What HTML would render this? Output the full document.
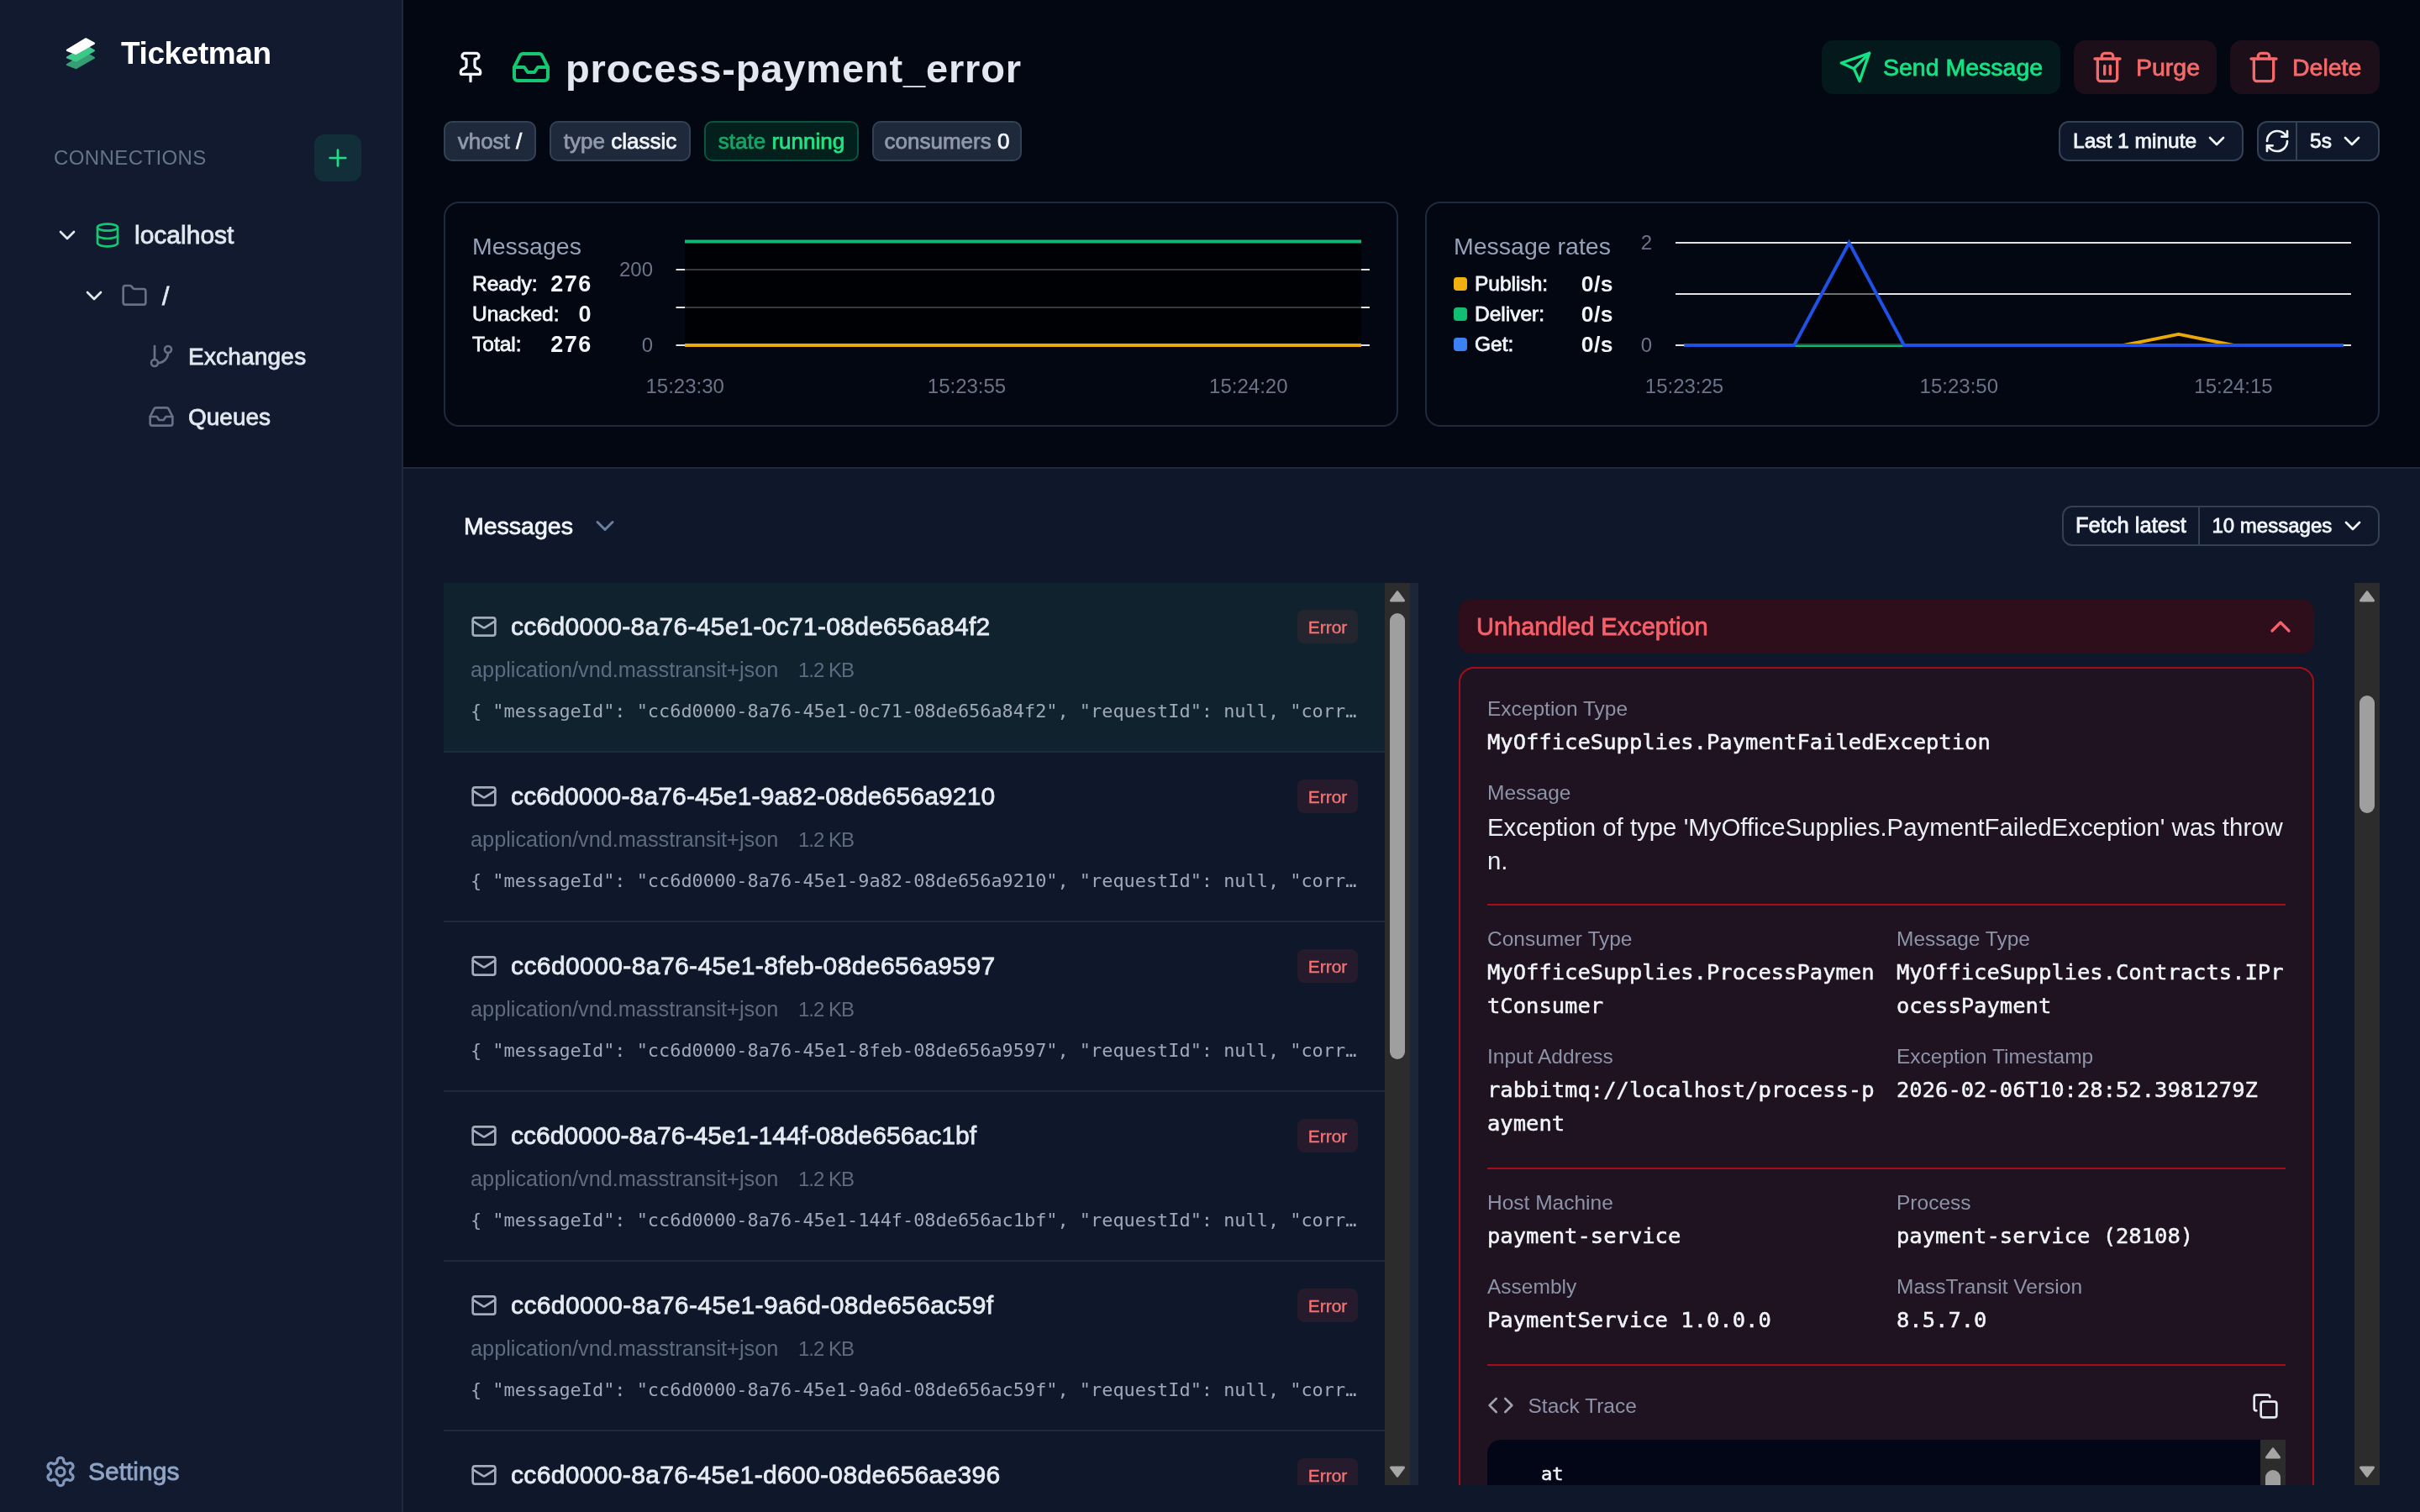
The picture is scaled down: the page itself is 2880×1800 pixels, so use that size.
<!DOCTYPE html>
<html lang="en"><head><meta charset="utf-8"><title>Ticketman - process-payment_error</title>
<style>
html,body{margin:0;padding:0;}
body{width:2880px;height:1800px;overflow:hidden;background:#0f172a;
  font-family:"Liberation Sans",sans-serif;color:#e2e8f0;}
#app{position:relative;width:2880px;height:1800px;overflow:hidden;}
.abs,.t,.ic{position:absolute;}
.t{white-space:nowrap;}
.b{font-weight:bold;}
.mono{font-family:"DejaVu Sans Mono","Liberation Mono",monospace;}
.ic{display:block;overflow:visible;}

/* ---------- sidebar ---------- */
#sidebar{position:absolute;left:0;top:0;width:478px;height:1800px;background:#111a2e;
  border-right:2px solid #1e293b;}
#addbtn{position:absolute;left:374px;top:160px;width:56px;height:56px;border-radius:12px;background:#112e39;}

/* ---------- header ---------- */
#header{position:absolute;left:480px;top:0;width:2400px;height:556px;background:#030712;
  border-bottom:2px solid #1e293b;}
.tag{position:absolute;top:144px;height:44px;border:2px solid #334155;background:#1e293b;border-radius:10px;
  font-size:26px;line-height:44px;color:#9099ab;white-space:nowrap;text-align:center;}
.tag b{font-weight:normal;color:#f1f5f9;}
.tag.run{background:#03201c;border-color:#0a5540;color:#16a568;}
.tag.run b{color:#22e384;}
.btn{position:absolute;top:48px;height:64px;border-radius:14px;}
.btn.g{background:#03191c;}
.btn.r{background:#1c0f1a;}
.sel{position:absolute;height:44px;border:2px solid #334155;background:#0f172a;border-radius:12px;}
.card{position:absolute;top:240px;width:1132px;height:264px;border:2px solid #1e293b;border-radius:18px;background:#030712;}

/* ---------- lower ---------- */
#lower{position:absolute;left:480px;top:558px;width:2400px;height:1242px;background:#0f172a;}
.item{position:absolute;left:48px;width:1120px;height:200px;border-bottom:2px solid #1c2a3c;}
.item.sel0{background:#0f222d;}
.err{position:absolute;left:1016px;top:32px;width:72px;height:40px;border-radius:8px;background:rgba(239,68,68,0.1);
  color:#f87171;font-size:21px;line-height:41px;text-align:center;-webkit-text-stroke:0.4px currentColor;}
.sb{position:absolute;background:#2c2c2c;}
.sb .th{position:absolute;left:6px;width:18px;border-radius:9px;background:#9f9f9f;}
#gutter{position:absolute;left:1198px;top:136px;width:10px;height:1074px;background:#1b2638;}
#pane{position:absolute;left:1208px;top:136px;width:1114px;height:1074px;overflow:hidden;}
#exhead{position:absolute;left:48px;top:20px;width:1018px;height:64px;border-radius:14px;background:#2d0e1a;}
#exbox{position:absolute;left:48px;top:100px;width:1014px;height:1100px;border:2px solid #a50d1b;border-radius:18px;background:#1f1221;}
.hr{position:absolute;left:32px;width:950px;height:2px;background:#a50d1b;}
.lab{color:#8a93a6;}
#code{position:absolute;left:32px;top:918px;width:950px;height:200px;border-radius:16px 0 0 16px;background:#020617;overflow:hidden;}

/* emulate medium weight of the original UI font */
.m{-webkit-text-stroke:0.8px currentColor;}
.tag{-webkit-text-stroke:0.75px currentColor;}
.mono.w{-webkit-text-stroke:0.5px currentColor;}
#app{will-change:transform;}

</style></head>
<body>
<div id="app">
<div id="sidebar">
<svg class="ic" style="left:76px;top:44px;width:40px;height:40px" viewBox="0 0 40 40" stroke-linejoin="round" stroke-width="2.4"><polygon points="4,33 26.2,19.4 35.8,24.8 14.4,37" fill="#349f72" stroke="#349f72"/><polygon points="4,24.4 26.2,10.8 35.8,16.2 14.4,28.4" fill="#3cc888" stroke="#3cc888"/><polygon points="4,15.8 26.2,2.4 35.8,7.6 14.4,19.8" fill="#ffffff" stroke="#ffffff"/></svg>
<div class="t b" style="left:144px;top:37.5px;font-size:37px;line-height:51px;color:#ffffff;letter-spacing:-0.4px">Ticketman</div>
<div class="t " style="left:64px;top:170.5px;font-size:24px;line-height:33px;color:#64748b;letter-spacing:0.4px">CONNECTIONS</div>
<div id="addbtn"></div>
<svg class="ic" style="left:386px;top:172px;width:32px;height:32px;" viewBox="0 0 24 24" fill="none" stroke="#16e386" stroke-width="2" stroke-linecap="round" stroke-linejoin="round"><path d="M5 12h14"/><path d="M12 5v14"/></svg>
<svg class="ic" style="left:64px;top:264px;width:32px;height:32px;" viewBox="0 0 24 24" fill="none" stroke="#e2e8f0" stroke-width="2" stroke-linecap="round" stroke-linejoin="round"><path d="m6 9 6 6 6-6"/></svg>
<svg class="ic" style="left:112px;top:264px;width:32px;height:32px;" viewBox="0 0 24 24" fill="none" stroke="#14c873" stroke-width="2" stroke-linecap="round" stroke-linejoin="round"><ellipse cx="12" cy="5" rx="9" ry="3"/><path d="M3 5V19A9 3 0 0 0 21 19V5"/><path d="M3 12A9 3 0 0 0 21 12"/></svg>
<div class="t m" style="left:160px;top:259.0px;font-size:30px;line-height:42px;color:#e2e8f0;">localhost</div>
<svg class="ic" style="left:96px;top:336px;width:32px;height:32px;" viewBox="0 0 24 24" fill="none" stroke="#e2e8f0" stroke-width="2" stroke-linecap="round" stroke-linejoin="round"><path d="m6 9 6 6 6-6"/></svg>
<svg class="ic" style="left:144px;top:336px;width:32px;height:32px;" viewBox="0 0 24 24" fill="none" stroke="#667088" stroke-width="2" stroke-linecap="round" stroke-linejoin="round"><path d="M20 20a2 2 0 0 0 2-2V8a2 2 0 0 0-2-2h-7.9a2 2 0 0 1-1.69-.9L9.6 3.9A2 2 0 0 0 7.93 3H4a2 2 0 0 0-2 2v13a2 2 0 0 0 2 2Z"/></svg>
<div class="t m" style="left:193px;top:332.4px;font-size:30px;line-height:42px;color:#e2e8f0;">/</div>
<svg class="ic" style="left:176px;top:408px;width:32px;height:32px;" viewBox="0 0 24 24" fill="none" stroke="#667088" stroke-width="2" stroke-linecap="round" stroke-linejoin="round"><line x1="6" x2="6" y1="3" y2="15"/><circle cx="18" cy="6" r="3"/><circle cx="6" cy="18" r="3"/><path d="M18 9a9 9 0 0 1-9 9"/></svg>
<div class="t m" style="left:224px;top:404.5px;font-size:28px;line-height:39px;color:#e2e8f0;letter-spacing:0.2px">Exchanges</div>
<svg class="ic" style="left:176px;top:480px;width:32px;height:32px;" viewBox="0 0 24 24" fill="none" stroke="#667088" stroke-width="2" stroke-linecap="round" stroke-linejoin="round"><polyline points="22 12 16 12 14 15 10 15 8 12 2 12"/><path d="M5.45 5.11 2 12v6a2 2 0 0 0 2 2h16a2 2 0 0 0 2-2v-6l-3.45-6.89A2 2 0 0 0 16.76 4H7.24a2 2 0 0 0-1.79 1.11z"/></svg>
<div class="t m" style="left:224px;top:476.5px;font-size:28px;line-height:39px;color:#e2e8f0;">Queues</div>
<svg class="ic" style="left:52px;top:1732px;width:40px;height:40px;" viewBox="0 0 24 24" fill="none" stroke="#8196b8" stroke-width="2" stroke-linecap="round" stroke-linejoin="round"><path d="M12.22 2h-.44a2 2 0 0 0-2 2v.18a2 2 0 0 1-1 1.73l-.43.25a2 2 0 0 1-2 0l-.15-.08a2 2 0 0 0-2.73.73l-.22.38a2 2 0 0 0 .73 2.73l.15.1a2 2 0 0 1 1 1.72v.51a2 2 0 0 1-1 1.74l-.15.09a2 2 0 0 0-.73 2.73l.22.38a2 2 0 0 0 2.73.73l.15-.08a2 2 0 0 1 2 0l.43.25a2 2 0 0 1 1 1.73V20a2 2 0 0 0 2 2h.44a2 2 0 0 0 2-2v-.18a2 2 0 0 1 1-1.73l.43-.25a2 2 0 0 1 2 0l.15.08a2 2 0 0 0 2.73-.73l.22-.39a2 2 0 0 0-.73-2.73l-.15-.08a2 2 0 0 1-1-1.74v-.5a2 2 0 0 1 1-1.74l.15-.09a2 2 0 0 0 .73-2.73l-.22-.38a2 2 0 0 0-2.73-.73l-.15.08a2 2 0 0 1-2 0l-.43-.25a2 2 0 0 1-1-1.73V4a2 2 0 0 0-2-2z"/><circle cx="12" cy="12" r="3"/></svg>
<div class="t m" style="left:105px;top:1731.0px;font-size:30px;line-height:42px;color:#90a4c6;">Settings</div>
</div>
<div id="header">
<svg class="ic" style="left:60px;top:60px;width:40px;height:40px;" viewBox="0 0 24 24" fill="none" stroke="#f1f5f9" stroke-width="2" stroke-linecap="round" stroke-linejoin="round"><path d="M12 17v5"/><path d="M9 10.76a2 2 0 0 1-1.11 1.79l-1.78.9A2 2 0 0 0 5 15.24V16a1 1 0 0 0 1 1h12a1 1 0 0 0 1-1v-.76a2 2 0 0 0-1.11-1.79l-1.78-.9A2 2 0 0 1 15 10.76V7a1 1 0 0 1 1-1 2 2 0 0 0 0-4H8a2 2 0 0 0 0 4 1 1 0 0 1 1 1z"/></svg>
<svg class="ic" style="left:128px;top:56px;width:48px;height:48px;" viewBox="0 0 24 24" fill="none" stroke="#14c873" stroke-width="2" stroke-linecap="round" stroke-linejoin="round"><polyline points="22 12 16 12 14 15 10 15 8 12 2 12"/><path d="M5.45 5.11 2 12v6a2 2 0 0 0 2 2h16a2 2 0 0 0 2-2v-6l-3.45-6.89A2 2 0 0 0 16.76 4H7.24a2 2 0 0 0-1.79 1.11z"/></svg>
<div class="t b" style="left:193px;top:48.5px;font-size:47px;line-height:65px;color:#e2e8f0;letter-spacing:0.85px">process-payment_error</div>
<div class="tag" style="left:48px;width:106px">vhost <b>/</b></div>
<div class="tag" style="left:174px;width:164px">type <b>classic</b></div>
<div class="tag run" style="left:358px;width:180px">state <b>running</b></div>
<div class="tag" style="left:558px;width:174px">consumers <b>0</b></div>
<div class="btn g" style="left:1688px;width:284px"></div>
<svg class="ic" style="left:1708px;top:60px;width:40px;height:40px;" viewBox="0 0 24 24" fill="none" stroke="#12e384" stroke-width="2" stroke-linecap="round" stroke-linejoin="round"><path d="m22 2-7 20-4-9-9-4Z"/><path d="M22 2 11 13"/></svg>
<div class="t m" style="left:1761px;top:60.5px;font-size:28.5px;line-height:39px;color:#12e384;">Send Message</div>
<div class="btn r" style="left:1988px;width:170px"></div>
<svg class="ic" style="left:2008px;top:60px;width:40px;height:40px;" viewBox="0 0 24 24" fill="none" stroke="#f46a6a" stroke-width="2" stroke-linecap="round" stroke-linejoin="round"><path d="M3 6h18"/><path d="M19 6v14c0 1-1 2-2 2H7c-1 0-2-1-2-2V6"/><path d="M8 6V4c0-1 1-2 2-2h4c1 0 2 1 2 2v2"/><line x1="10" x2="10" y1="11" y2="17"/><line x1="14" x2="14" y1="11" y2="17"/></svg>
<div class="t m" style="left:2062px;top:60.5px;font-size:28.5px;line-height:39px;color:#f46a6a;">Purge</div>
<div class="btn r" style="left:2174px;width:178px"></div>
<svg class="ic" style="left:2194px;top:60px;width:40px;height:40px;" viewBox="0 0 24 24" fill="none" stroke="#f46a6a" stroke-width="2" stroke-linecap="round" stroke-linejoin="round"><path d="M3 6h18"/><path d="M19 6v14c0 1-1 2-2 2H7c-1 0-2-1-2-2V6"/><path d="M8 6V4c0-1 1-2 2-2h4c1 0 2 1 2 2v2"/></svg>
<div class="t m" style="left:2248px;top:60.5px;font-size:28.5px;line-height:39px;color:#f46a6a;">Delete</div>
<div class="sel" style="left:1970px;top:144px;width:216px"></div>
<div class="t m" style="left:1987px;top:151.0px;font-size:24.5px;line-height:34px;color:#f1f5f9;">Last 1 minute</div>
<svg class="ic" style="left:2142px;top:152px;width:32px;height:32px;" viewBox="0 0 24 24" fill="none" stroke="#f1f5f9" stroke-width="2" stroke-linecap="round" stroke-linejoin="round"><path d="m6 9 6 6 6-6"/></svg>
<div class="sel" style="left:2206px;top:144px;width:142px"></div>
<div class="abs" style="left:2252px;top:146px;width:2px;height:44px;background:#334155"></div>
<svg class="ic" style="left:2214px;top:152px;width:32px;height:32px;" viewBox="0 0 24 24" fill="none" stroke="#f1f5f9" stroke-width="2" stroke-linecap="round" stroke-linejoin="round"><path d="M3 12a9 9 0 0 1 9-9 9.75 9.75 0 0 1 6.74 2.74L21 8"/><path d="M21 3v5h-5"/><path d="M21 12a9 9 0 0 1-9 9 9.75 9.75 0 0 1-6.74-2.74L3 16"/><path d="M8 16H3v5"/></svg>
<div class="t m" style="left:2269px;top:151.0px;font-size:24.5px;line-height:34px;color:#f1f5f9;">5s</div>
<svg class="ic" style="left:2303px;top:152px;width:32px;height:32px;" viewBox="0 0 24 24" fill="none" stroke="#f1f5f9" stroke-width="2" stroke-linecap="round" stroke-linejoin="round"><path d="m6 9 6 6 6-6"/></svg>
<div class="card" style="left:48px"></div>
<div class="card" style="left:1216px"></div>
<div class="t " style="left:82px;top:273.9px;font-size:28.5px;line-height:39px;color:#94a3b8;">Messages</div>
<div class="t m" style="left:82px;top:320.6px;font-size:24.5px;line-height:34px;color:#f1f5f9;">Ready:</div>
<div class="t b" style="right:2175px;top:319.6px;font-size:27px;line-height:37px;color:#f1f5f9;letter-spacing:1.6px">276</div>
<div class="t m" style="left:82px;top:356.6px;font-size:24.5px;line-height:34px;color:#f1f5f9;">Unacked:</div>
<div class="t b" style="right:2175px;top:355.6px;font-size:27px;line-height:37px;color:#f1f5f9;letter-spacing:1.6px">0</div>
<div class="t m" style="left:82px;top:392.6px;font-size:24.5px;line-height:34px;color:#f1f5f9;">Total:</div>
<div class="t b" style="right:2175px;top:391.6px;font-size:27px;line-height:37px;color:#f1f5f9;letter-spacing:1.6px">276</div>
<div class="t " style="left:1250px;top:273.9px;font-size:28.5px;line-height:39px;color:#94a3b8;">Message rates</div>
<div class="abs" style="left:1250px;top:329.6px;width:16px;height:16px;border-radius:4px;background:#f0b010"></div>
<div class="t m" style="left:1275px;top:320.6px;font-size:24.5px;line-height:34px;color:#f1f5f9;">Publish:</div>
<div class="t b" style="right:960px;top:319.6px;font-size:26.5px;line-height:37px;color:#f1f5f9;letter-spacing:0.5px">0/s</div>
<div class="abs" style="left:1250px;top:365.6px;width:16px;height:16px;border-radius:4px;background:#10c070"></div>
<div class="t m" style="left:1275px;top:356.6px;font-size:24.5px;line-height:34px;color:#f1f5f9;">Deliver:</div>
<div class="t b" style="right:960px;top:355.6px;font-size:26.5px;line-height:37px;color:#f1f5f9;letter-spacing:0.5px">0/s</div>
<div class="abs" style="left:1250px;top:401.6px;width:16px;height:16px;border-radius:4px;background:#3b82f6"></div>
<div class="t m" style="left:1275px;top:392.6px;font-size:24.5px;line-height:34px;color:#f1f5f9;">Get:</div>
<div class="t b" style="right:960px;top:391.6px;font-size:26.5px;line-height:37px;color:#f1f5f9;letter-spacing:0.5px">0/s</div>
<svg class="ic" style="left:0;top:0;width:2400px;height:556px" viewBox="480 0 2400 556" font-family="Liberation Sans, sans-serif" font-size="24" fill="#6b7589"><line x1="804.5" x2="1630" y1="321.0" y2="321.0" stroke="#e2e2e2" stroke-width="2"/><line x1="804.5" x2="1630" y1="366.0" y2="366.0" stroke="#e2e2e2" stroke-width="2"/><line x1="804.5" x2="1630" y1="411.0" y2="411.0" stroke="#e2e2e2" stroke-width="2"/><rect x="815" y="287.4" width="805" height="123.6" fill="#000" fill-opacity="0.75"/><line x1="815" x2="1620" y1="411.0" y2="411.0" stroke="#ecaa0a" stroke-width="4"/><line x1="815" x2="1620" y1="287.4" y2="287.4" stroke="#10b973" stroke-width="4"/><text x="777" y="328.6" text-anchor="end">200</text><text x="777" y="418.6" text-anchor="end">0</text><text x="815.2" y="468" text-anchor="middle">15:23:30</text><text x="1150.5" y="468" text-anchor="middle">15:23:55</text><text x="1485.8" y="468" text-anchor="middle">15:24:20</text><line x1="1994" x2="2798" y1="289.1" y2="289.1" stroke="#e2e2e2" stroke-width="2"/><line x1="1994" x2="2798" y1="350.05" y2="350.05" stroke="#e2e2e2" stroke-width="2"/><line x1="1994" x2="2798" y1="411.0" y2="411.0" stroke="#e2e2e2" stroke-width="2"/><polygon points="2004.5,411.0 2069.8,411.0 2135.2,411.0 2200.6,411.0 2265.9,411.0 2331.2,411.0 2396.6,411.0 2461.9,411.0 2527.3,411.0 2592.7,397.9 2658.0,411.0 2723.3,411.0 2788.7,411.0" fill="#000" fill-opacity="0.5"/><polyline points="2004.5,411.0 2069.8,411.0 2135.2,411.0 2200.6,411.0 2265.9,411.0 2331.2,411.0 2396.6,411.0 2461.9,411.0 2527.3,411.0 2592.7,397.9 2658.0,411.0 2723.3,411.0 2788.7,411.0" fill="none" stroke="#ecaa0a" stroke-width="4" stroke-linejoin="round"/><polyline points="2004.5,411.0 2069.8,411.0 2135.2,411.0 2200.6,411.0 2265.9,411.0 2331.2,411.0 2396.6,411.0 2461.9,411.0 2527.3,411.0 2592.7,411.0 2658.0,411.0 2723.3,411.0 2788.7,411.0" fill="none" stroke="#10b973" stroke-width="4"/><polygon points="2004.5,411.0 2069.8,411.0 2135.2,411.0 2200.6,289.1 2265.9,411.0 2331.2,411.0 2396.6,411.0 2461.9,411.0 2527.3,411.0 2592.7,411.0 2658.0,411.0 2723.3,411.0 2788.7,411.0" fill="#000" fill-opacity="0.5"/><polyline points="2004.5,411.0 2069.8,411.0 2135.2,411.0 2200.6,289.1 2265.9,411.0 2331.2,411.0 2396.6,411.0 2461.9,411.0 2527.3,411.0 2592.7,411.0 2658.0,411.0 2723.3,411.0 2788.7,411.0" fill="none" stroke="#1f51e4" stroke-width="4" stroke-linejoin="miter"/><text x="1966" y="296.7" text-anchor="end">2</text><text x="1966" y="418.6" text-anchor="end">0</text><text x="2004.5" y="468" text-anchor="middle">15:23:25</text><text x="2331.3" y="468" text-anchor="middle">15:23:50</text><text x="2658" y="468" text-anchor="middle">15:24:15</text></svg>
</div>
<div id="lower">
<div class="t m" style="left:72px;top:48.5px;font-size:28.5px;line-height:39px;color:#f1f5f9;">Messages</div>
<svg class="ic" style="left:222px;top:50px;width:36px;height:36px;" viewBox="0 0 24 24" fill="none" stroke="#6b7f9e" stroke-width="2" stroke-linecap="round" stroke-linejoin="round"><path d="m6 9 6 6 6-6"/></svg>
<div class="sel" style="left:1974px;top:44px;width:374px;background:#0f172a"></div>
<div class="abs" style="left:2136px;top:46px;width:2px;height:44px;background:#334155"></div>
<div class="t m" style="left:1990px;top:49.5px;font-size:25.5px;line-height:35px;color:#f1f5f9;">Fetch latest</div>
<div class="t m" style="left:2152.5px;top:50.5px;font-size:24px;line-height:33px;color:#f1f5f9;">10 messages</div>
<svg class="ic" style="left:2304px;top:52px;width:32px;height:32px;" viewBox="0 0 24 24" fill="none" stroke="#f1f5f9" stroke-width="2" stroke-linecap="round" stroke-linejoin="round"><path d="m6 9 6 6 6-6"/></svg>
<div class="abs" id="list" style="left:0;top:136px;width:1168px;height:1074px;overflow:hidden">
<div class="item sel0" style="top:0px">
<svg class="ic" style="left:32px;top:36px;width:32px;height:32px;" viewBox="0 0 24 24" fill="none" stroke="#a4acba" stroke-width="2" stroke-linecap="round" stroke-linejoin="round"><rect width="20" height="16" x="2" y="4" rx="2"/><path d="m22 7-8.97 5.7a1.94 1.94 0 0 1-2.06 0L2 7"/></svg>
<div class="t m" style="left:80px;top:31.0px;font-size:30px;line-height:42px;color:#e6ebf2;letter-spacing:0.278px">cc6d0000-8a76-45e1-0c71-08de656a84f2</div>
<div class="err">Error</div>
<div class="t " style="left:32px;top:85.5px;font-size:25.3px;line-height:35px;color:#5f6b80;">application/vnd.masstransit+json</div>
<div class="t " style="left:422px;top:86.5px;font-size:24px;line-height:33px;color:#5f6b80;letter-spacing:-1px">1.2 KB</div>
<div class="t mono" style="left:32px;top:138.3px;font-size:21.9px;line-height:30px;color:#a0a9b8;">{ &quot;messageId&quot;: &quot;cc6d0000-8a76-45e1-0c71-08de656a84f2&quot;, &quot;requestId&quot;: null, &quot;corr…</div>
</div>
<div class="item" style="top:202px">
<svg class="ic" style="left:32px;top:36px;width:32px;height:32px;" viewBox="0 0 24 24" fill="none" stroke="#a4acba" stroke-width="2" stroke-linecap="round" stroke-linejoin="round"><rect width="20" height="16" x="2" y="4" rx="2"/><path d="m22 7-8.97 5.7a1.94 1.94 0 0 1-2.06 0L2 7"/></svg>
<div class="t m" style="left:80px;top:31.0px;font-size:30px;line-height:42px;color:#e6ebf2;letter-spacing:0.163px">cc6d0000-8a76-45e1-9a82-08de656a9210</div>
<div class="err">Error</div>
<div class="t " style="left:32px;top:85.5px;font-size:25.3px;line-height:35px;color:#5f6b80;">application/vnd.masstransit+json</div>
<div class="t " style="left:422px;top:86.5px;font-size:24px;line-height:33px;color:#5f6b80;letter-spacing:-1px">1.2 KB</div>
<div class="t mono" style="left:32px;top:138.3px;font-size:21.9px;line-height:30px;color:#a0a9b8;">{ &quot;messageId&quot;: &quot;cc6d0000-8a76-45e1-9a82-08de656a9210&quot;, &quot;requestId&quot;: null, &quot;corr…</div>
</div>
<div class="item" style="top:404px">
<svg class="ic" style="left:32px;top:36px;width:32px;height:32px;" viewBox="0 0 24 24" fill="none" stroke="#a4acba" stroke-width="2" stroke-linecap="round" stroke-linejoin="round"><rect width="20" height="16" x="2" y="4" rx="2"/><path d="m22 7-8.97 5.7a1.94 1.94 0 0 1-2.06 0L2 7"/></svg>
<div class="t m" style="left:80px;top:31.0px;font-size:30px;line-height:42px;color:#e6ebf2;letter-spacing:0.401px">cc6d0000-8a76-45e1-8feb-08de656a9597</div>
<div class="err">Error</div>
<div class="t " style="left:32px;top:85.5px;font-size:25.3px;line-height:35px;color:#5f6b80;">application/vnd.masstransit+json</div>
<div class="t " style="left:422px;top:86.5px;font-size:24px;line-height:33px;color:#5f6b80;letter-spacing:-1px">1.2 KB</div>
<div class="t mono" style="left:32px;top:138.3px;font-size:21.9px;line-height:30px;color:#a0a9b8;">{ &quot;messageId&quot;: &quot;cc6d0000-8a76-45e1-8feb-08de656a9597&quot;, &quot;requestId&quot;: null, &quot;corr…</div>
</div>
<div class="item" style="top:606px">
<svg class="ic" style="left:32px;top:36px;width:32px;height:32px;" viewBox="0 0 24 24" fill="none" stroke="#a4acba" stroke-width="2" stroke-linecap="round" stroke-linejoin="round"><rect width="20" height="16" x="2" y="4" rx="2"/><path d="m22 7-8.97 5.7a1.94 1.94 0 0 1-2.06 0L2 7"/></svg>
<div class="t m" style="left:80px;top:31.0px;font-size:30px;line-height:42px;color:#e6ebf2;letter-spacing:0.054px">cc6d0000-8a76-45e1-144f-08de656ac1bf</div>
<div class="err">Error</div>
<div class="t " style="left:32px;top:85.5px;font-size:25.3px;line-height:35px;color:#5f6b80;">application/vnd.masstransit+json</div>
<div class="t " style="left:422px;top:86.5px;font-size:24px;line-height:33px;color:#5f6b80;letter-spacing:-1px">1.2 KB</div>
<div class="t mono" style="left:32px;top:138.3px;font-size:21.9px;line-height:30px;color:#a0a9b8;">{ &quot;messageId&quot;: &quot;cc6d0000-8a76-45e1-144f-08de656ac1bf&quot;, &quot;requestId&quot;: null, &quot;corr…</div>
</div>
<div class="item" style="top:808px">
<svg class="ic" style="left:32px;top:36px;width:32px;height:32px;" viewBox="0 0 24 24" fill="none" stroke="#a4acba" stroke-width="2" stroke-linecap="round" stroke-linejoin="round"><rect width="20" height="16" x="2" y="4" rx="2"/><path d="m22 7-8.97 5.7a1.94 1.94 0 0 1-2.06 0L2 7"/></svg>
<div class="t m" style="left:80px;top:31.0px;font-size:30px;line-height:42px;color:#e6ebf2;letter-spacing:0.392px">cc6d0000-8a76-45e1-9a6d-08de656ac59f</div>
<div class="err">Error</div>
<div class="t " style="left:32px;top:85.5px;font-size:25.3px;line-height:35px;color:#5f6b80;">application/vnd.masstransit+json</div>
<div class="t " style="left:422px;top:86.5px;font-size:24px;line-height:33px;color:#5f6b80;letter-spacing:-1px">1.2 KB</div>
<div class="t mono" style="left:32px;top:138.3px;font-size:21.9px;line-height:30px;color:#a0a9b8;">{ &quot;messageId&quot;: &quot;cc6d0000-8a76-45e1-9a6d-08de656ac59f&quot;, &quot;requestId&quot;: null, &quot;corr…</div>
</div>
<div class="item" style="top:1010px">
<svg class="ic" style="left:32px;top:36px;width:32px;height:32px;" viewBox="0 0 24 24" fill="none" stroke="#a4acba" stroke-width="2" stroke-linecap="round" stroke-linejoin="round"><rect width="20" height="16" x="2" y="4" rx="2"/><path d="m22 7-8.97 5.7a1.94 1.94 0 0 1-2.06 0L2 7"/></svg>
<div class="t m" style="left:80px;top:31.0px;font-size:30px;line-height:42px;color:#e6ebf2;letter-spacing:0.337px">cc6d0000-8a76-45e1-d600-08de656ae396</div>
<div class="err">Error</div>
<div class="t " style="left:32px;top:85.5px;font-size:25.3px;line-height:35px;color:#5f6b80;">application/vnd.masstransit+json</div>
<div class="t " style="left:422px;top:86.5px;font-size:24px;line-height:33px;color:#5f6b80;letter-spacing:-1px">1.2 KB</div>
<div class="t mono" style="left:32px;top:138.3px;font-size:21.9px;line-height:30px;color:#a0a9b8;">{ &quot;messageId&quot;: &quot;cc6d0000-8a76-45e1-d600-08de656ae396&quot;, &quot;requestId&quot;: null, &quot;corr…</div>
</div>
</div>
<div class="sb" style="left:1168px;top:136px;width:30px;height:1074px"><svg class="ic" style="left:5px;top:9px;width:20px;height:14px" viewBox="0 0 20 14"><polygon points="2.5,12 10,1.8 17.5,12" fill="#a6a6a6" stroke="#a6a6a6" stroke-width="3" stroke-linejoin="round"/></svg><div class="th" style="top:36px;height:531px"></div><svg class="ic" style="left:5px;top:1051px;width:20px;height:14px" viewBox="0 0 20 14"><polygon points="2.5,2 10,12.2 17.5,2" fill="#a6a6a6" stroke="#a6a6a6" stroke-width="3" stroke-linejoin="round"/></svg></div>
<div id="gutter"></div>
<div id="pane">
<div id="exhead"></div>
<div class="t m" style="left:69px;top:32.0px;font-size:29px;line-height:40px;color:#f6606a;">Unhandled Exception</div>
<svg class="ic" style="left:1006px;top:32px;width:40px;height:40px;" viewBox="0 0 24 24" fill="none" stroke="#f6606a" stroke-width="2" stroke-linecap="round" stroke-linejoin="round"><path d="m18 15-6-6-6 6"/></svg>
<div id="exbox">
<div class="t " style="left:32px;top:31.0px;font-size:24.5px;line-height:34px;color:#8d94a8;">Exception Type</div>
<div class="t mono w" style="left:32px;top:70.0px;font-size:25.5px;line-height:35px;color:#f1f5f9;">MyOfficeSupplies.PaymentFailedException</div>
<div class="t " style="left:32px;top:131.0px;font-size:24.5px;line-height:34px;color:#8d94a8;">Message</div>
<div class="t " style="left:32px;top:167.9px;font-size:29.4px;line-height:41px;color:#e9edf4;">Exception of type 'MyOfficeSupplies.PaymentFailedException' was throw</div>
<div class="t " style="left:32px;top:207.5px;font-size:29.4px;line-height:41px;color:#e9edf4;">n.</div>
<div class="hr" style="top:280px"></div>
<div class="t " style="left:32px;top:305.0px;font-size:24.5px;line-height:34px;color:#8d94a8;">Consumer Type</div>
<div class="t " style="left:519px;top:305.0px;font-size:24.5px;line-height:34px;color:#8d94a8;">Message Type</div>
<div class="t mono w" style="left:32px;top:344.1px;font-size:25.5px;line-height:35px;color:#f1f5f9;">MyOfficeSupplies.ProcessPaymen</div>
<div class="t mono w" style="left:519px;top:344.1px;font-size:25.5px;line-height:35px;color:#f1f5f9;">MyOfficeSupplies.Contracts.IPr</div>
<div class="t mono w" style="left:32px;top:383.5px;font-size:25.5px;line-height:35px;color:#f1f5f9;">tConsumer</div>
<div class="t mono w" style="left:519px;top:383.5px;font-size:25.5px;line-height:35px;color:#f1f5f9;">ocessPayment</div>
<div class="t " style="left:32px;top:444.5px;font-size:24.5px;line-height:34px;color:#8d94a8;">Input Address</div>
<div class="t " style="left:519px;top:444.5px;font-size:24.5px;line-height:34px;color:#8d94a8;">Exception Timestamp</div>
<div class="t mono w" style="left:32px;top:483.8px;font-size:25.5px;line-height:35px;color:#f1f5f9;">rabbitmq://localhost/process-p</div>
<div class="t mono w" style="left:519px;top:483.8px;font-size:25.5px;line-height:35px;color:#f1f5f9;">2026-02-06T10:28:52.3981279Z</div>
<div class="t mono w" style="left:32px;top:523.5px;font-size:25.5px;line-height:35px;color:#f1f5f9;">ayment</div>
<div class="hr" style="top:594px"></div>
<div class="t " style="left:32px;top:618.5px;font-size:24.5px;line-height:34px;color:#8d94a8;">Host Machine</div>
<div class="t " style="left:519px;top:618.5px;font-size:24.5px;line-height:34px;color:#8d94a8;">Process</div>
<div class="t mono w" style="left:32px;top:657.5px;font-size:25.5px;line-height:35px;color:#f1f5f9;">payment-service</div>
<div class="t mono w" style="left:519px;top:657.5px;font-size:25.5px;line-height:35px;color:#f1f5f9;">payment-service (28108)</div>
<div class="t " style="left:32px;top:718.7px;font-size:24.5px;line-height:34px;color:#8d94a8;">Assembly</div>
<div class="t " style="left:519px;top:718.7px;font-size:24.5px;line-height:34px;color:#8d94a8;">MassTransit Version</div>
<div class="t mono w" style="left:32px;top:757.5px;font-size:25.5px;line-height:35px;color:#f1f5f9;">PaymentService 1.0.0.0</div>
<div class="t mono w" style="left:519px;top:757.5px;font-size:25.5px;line-height:35px;color:#f1f5f9;">8.5.7.0</div>
<div class="hr" style="top:828px"></div>
<svg class="ic" style="left:32px;top:861px;width:32px;height:32px;" viewBox="0 0 24 24" fill="none" stroke="#9da3b1" stroke-width="2" stroke-linecap="round" stroke-linejoin="round"><polyline points="16 18 22 12 16 6"/><polyline points="8 6 2 12 8 18"/></svg>
<div class="t " style="left:80.5px;top:860.5px;font-size:24.5px;line-height:34px;color:#8d94a8;">Stack Trace</div>
<svg class="ic" style="left:942px;top:862px;width:32px;height:32px;" viewBox="0 0 24 24" fill="none" stroke="#e2e8f0" stroke-width="2" stroke-linecap="round" stroke-linejoin="round"><rect width="14" height="14" x="8" y="8" rx="2" ry="2"/><path d="M4 16c-1.1 0-2-.9-2-2V4c0-1.1.9-2 2-2h10c1.1 0 2 .9 2 2"/></svg>
<div id="code">
<div class="t mono w" style="left:64px;top:25.7px;font-size:22px;line-height:30px;color:#f1f5f9;">at</div>
<div class="sb" style="left:920px;top:0;width:30px;height:200px"><svg class="ic" style="left:5px;top:9px;width:20px;height:14px" viewBox="0 0 20 14"><polygon points="2.5,12 10,1.8 17.5,12" fill="#a6a6a6" stroke="#a6a6a6" stroke-width="3" stroke-linejoin="round"/></svg><div class="th" style="top:36px;height:120px"></div></div>
</div>
</div>
</div>
<div class="sb" style="left:2322px;top:136px;width:30px;height:1074px"><svg class="ic" style="left:5px;top:9px;width:20px;height:14px" viewBox="0 0 20 14"><polygon points="2.5,12 10,1.8 17.5,12" fill="#a6a6a6" stroke="#a6a6a6" stroke-width="3" stroke-linejoin="round"/></svg><div class="th" style="top:134px;height:140px"></div><svg class="ic" style="left:5px;top:1051px;width:20px;height:14px" viewBox="0 0 20 14"><polygon points="2.5,2 10,12.2 17.5,2" fill="#a6a6a6" stroke="#a6a6a6" stroke-width="3" stroke-linejoin="round"/></svg></div>
</div>
</div>
</body></html>
